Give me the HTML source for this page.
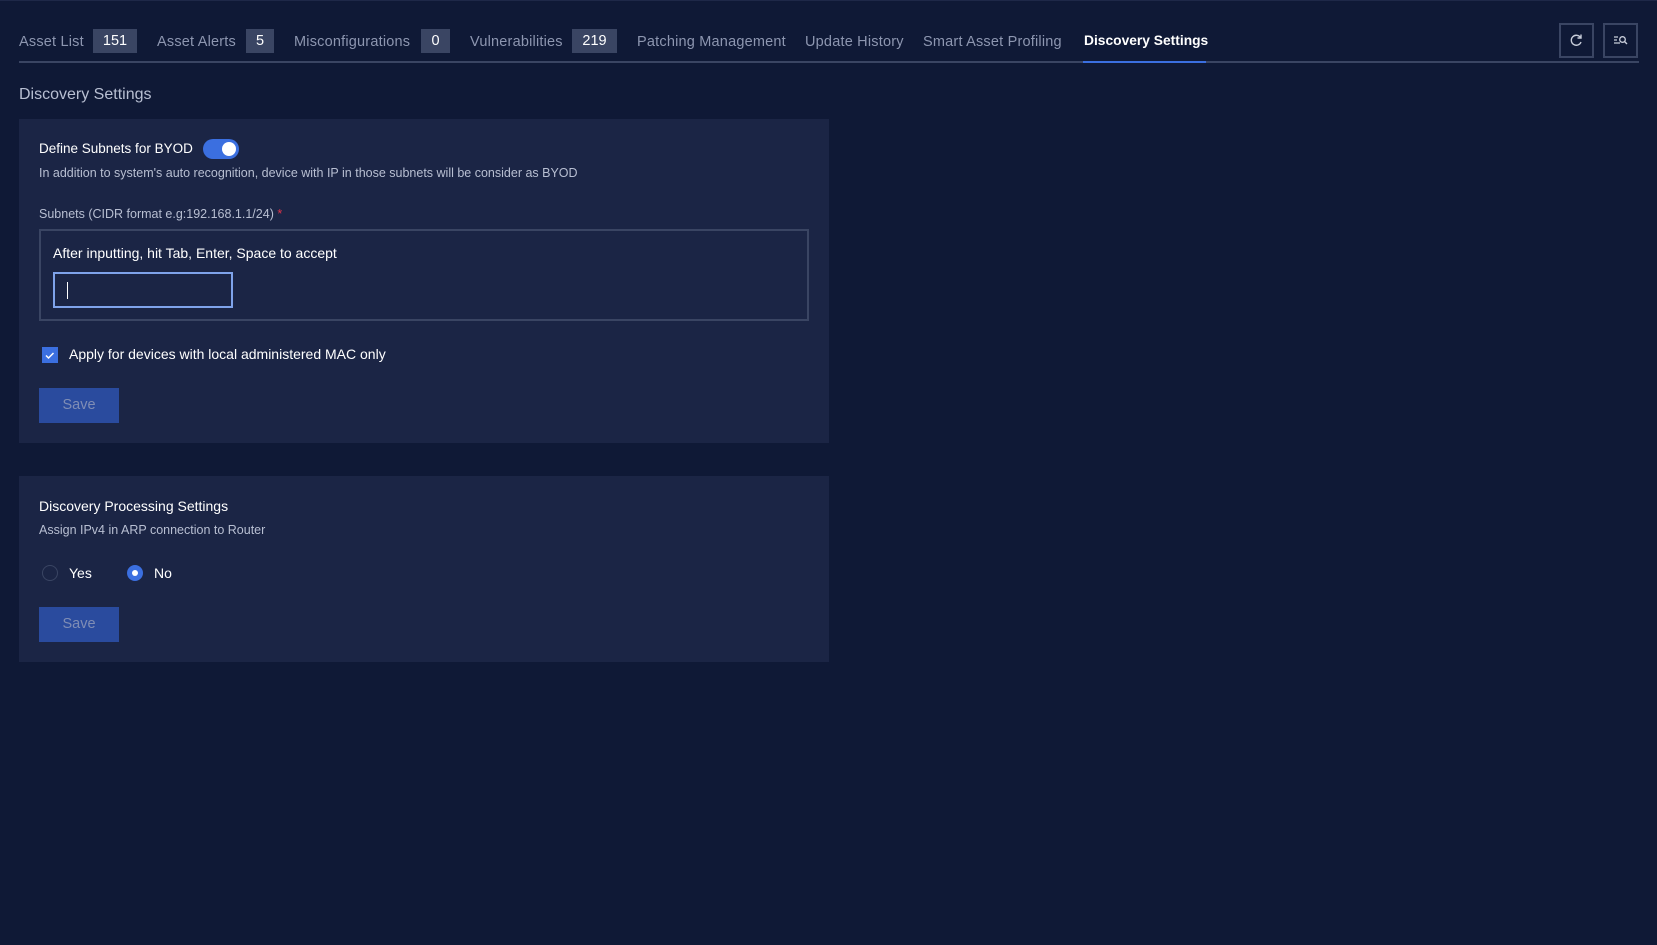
<!DOCTYPE html>
<html><head><meta charset="utf-8"><style>
*{margin:0;padding:0;box-sizing:border-box}
body{width:1657px;height:945px;background:#0f1936;font-family:"Liberation Sans",sans-serif;position:relative;overflow:hidden;color:#fff}
.a{position:absolute;white-space:nowrap}
.tab{position:absolute;top:31px;font-size:14.5px;color:#8d96b0;line-height:22px;letter-spacing:0.2px}
.badge{position:absolute;top:29px;height:24px;background:#3a4563;color:#fff;font-size:14.5px;line-height:24px;text-align:center}
.panel{position:absolute;left:19px;width:810px;background:#1b2545}
.btn{position:absolute;width:80px;height:35px;background:#2a4b9e;color:#7f8db5;font-size:14.5px;line-height:35px;text-align:center}
.ib{position:absolute;top:23px;width:35px;height:35px;border:2px solid #3a4563}
</style></head><body>
<div class="a" style="left:0;top:0;width:1657px;height:1px;background:#1e2848"></div>
<div class="tab" style="left:19px">Asset List</div><div class="badge" style="left:93px;width:44px">151</div>
<div class="tab" style="left:157px">Asset Alerts</div><div class="badge" style="left:246px;width:28px">5</div>
<div class="tab" style="left:294px">Misconfigurations</div><div class="badge" style="left:421px;width:29px">0</div>
<div class="tab" style="left:470px">Vulnerabilities</div><div class="badge" style="left:572px;width:45px">219</div>
<div class="tab" style="left:637px">Patching Management</div>
<div class="tab" style="left:805px">Update History</div>
<div class="tab" style="left:923px">Smart Asset Profiling</div>
<div class="tab" style="left:1084px;top:30px;color:#fff;font-weight:bold;font-size:13.8px;letter-spacing:0">Discovery Settings</div>
<div class="a" style="left:19px;top:61px;width:1620px;height:2px;background:#3a4563"></div>
<div class="a" style="left:1083px;top:61px;width:123px;height:2px;background:#3b6fe0"></div>
<div class="ib" style="left:1559px"><svg width="31" height="31" viewBox="0 0 31 31"><path d="M19.5 12.5A5 5 0 1 0 20 17" fill="none" stroke="#c8cdda" stroke-width="1.4"/><path d="M20 9.5v3.5h-3.5" fill="none" stroke="#c8cdda" stroke-width="1.4"/></svg></div>
<div class="ib" style="left:1603px"><svg width="31" height="31" viewBox="0 0 31 31"><path d="M9 12h4M9 15h3M9 18h6" stroke="#c8cdda" stroke-width="1.2"/><circle cx="17.5" cy="14.5" r="2.8" fill="none" stroke="#c8cdda" stroke-width="1.3"/><path d="M19.5 16.5l2.5 2.5" stroke="#c8cdda" stroke-width="1.4"/></svg></div>
<div class="a" style="left:19px;top:86px;font-size:16px;color:#b8bfd2">Discovery Settings</div>

<div class="panel" style="top:119px;height:324px"></div>
<div class="a" style="left:39px;top:141px;font-size:13.5px">Define Subnets for BYOD</div>
<div class="a" style="left:203px;top:139px;width:36px;height:20px;border-radius:10px;background:#3b6fe0"><div style="position:absolute;right:3px;top:3px;width:14px;height:14px;border-radius:50%;background:#fff"></div></div>
<div class="a" style="left:39px;top:166px;font-size:12.5px;color:#b8bfd2">In addition to system's auto recognition, device with IP in those subnets will be consider as BYOD</div>
<div class="a" style="left:39px;top:207px;font-size:12.5px;color:#b8bfd2">Subnets (CIDR format e.g:192.168.1.1/24) <span style="color:#e0334a">*</span></div>
<div class="a" style="left:39px;top:229px;width:770px;height:92px;border:2px solid #3a4563"></div>
<div class="a" style="left:53px;top:245px;font-size:14px">After inputting, hit Tab, Enter, Space to accept</div>
<div class="a" style="left:53px;top:272px;width:180px;height:36px;border:2px solid #7fa3ea"><div style="position:absolute;left:12px;top:8px;width:1px;height:17px;background:#fff"></div></div>
<div class="a" style="left:42px;top:347px;width:16px;height:16px;background:#3b6fe0"><svg width="16" height="16"><path d="M4 8.5l2.5 2.5 5-5" fill="none" stroke="#fff" stroke-width="1.5"/></svg></div>
<div class="a" style="left:69px;top:346px;font-size:14px">Apply for devices with local administered MAC only</div>
<div class="btn" style="left:39px;top:388px">Save</div>

<div class="panel" style="top:476px;height:186px"></div>
<div class="a" style="left:39px;top:498px;font-size:14px">Discovery Processing Settings</div>
<div class="a" style="left:39px;top:523px;font-size:12.5px;color:#b8bfd2">Assign IPv4 in ARP connection to Router</div>
<div class="a" style="left:42px;top:565px;width:16px;height:16px;border-radius:50%;border:1.5px solid #3a4563"></div>
<div class="a" style="left:69px;top:565px;font-size:14px">Yes</div>
<div class="a" style="left:127px;top:565px;width:16px;height:16px;border-radius:50%;background:#3b6fe0"><div style="position:absolute;left:5px;top:5px;width:6px;height:6px;border-radius:50%;background:#fff"></div></div>
<div class="a" style="left:154px;top:565px;font-size:14px">No</div>
<div class="btn" style="left:39px;top:607px">Save</div>
</body></html>
